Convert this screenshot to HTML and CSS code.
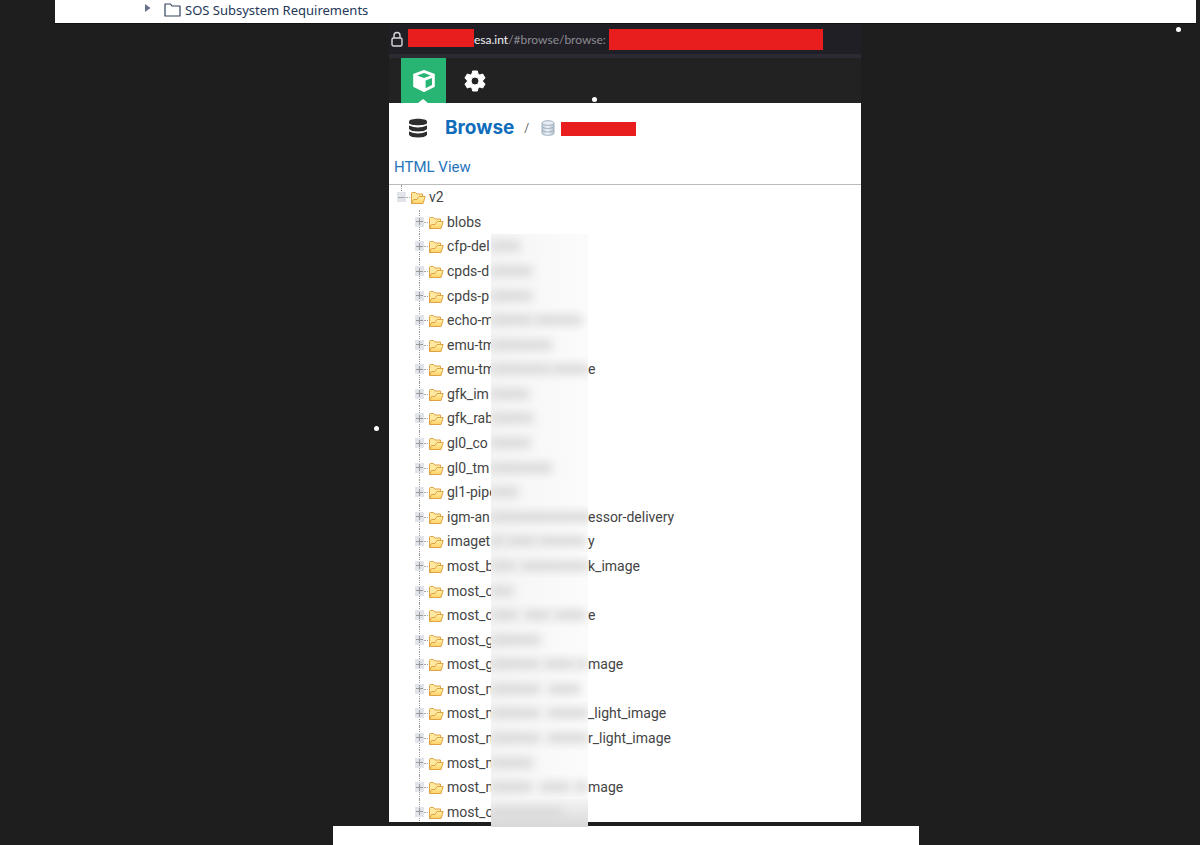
FILE: index.html
```html
<!DOCTYPE html>
<html lang="en">
<head>
<meta charset="utf-8">
<title>Browse</title>
<link rel="stylesheet" href="styles.css">
</head>
<body>
<svg class="defs" aria-hidden="true">
  <defs>
    <linearGradient id="gold" x1="0" y1="0" x2="0" y2="1"><stop offset="0" stop-color="#fff0a8"/><stop offset="1" stop-color="#ffd166"/></linearGradient>
    <linearGradient id="steel" x1="0" y1="0" x2="1" y2="0"><stop offset="0" stop-color="#b9c5d1"/><stop offset=".45" stop-color="#f0f5fa"/><stop offset="1" stop-color="#b3bfcb"/></linearGradient>
    <symbol id="folder" viewBox="0 0 16 14">
      <path d="M1.5 12.5V2.5Q1.5 1.5 2.5 1.5H5.5L7 3H12.5V5.5" fill="#ffe9a0" stroke="#dfa244"/>
      <path d="M1.5 12.5L3.5 8.5H7L9 5.5H15.2L13 12.5Z" fill="url(#gold)" stroke="#dfa244" stroke-linejoin="round"/>
    </symbol>
  </defs>
</svg>
<div class="page">
  <header class="outline">
    <button class="caret" aria-label="Expand"><svg width="6" height="10" viewBox="0 0 6 10"><path d="M0 1L5.5 5L0 9Z" fill="#66718c"/></svg></button>
    <svg width="17" height="14" viewBox="0 0 17 14" fill="none" stroke="#34435f" stroke-width="1.2"><path d="M1 13V1H6.5L8 3H16V13Z" stroke-linejoin="round"/></svg>
    <a class="outline-link" href="#sos">SOS Subsystem Requirements</a>
  </header>

  <main class="window">
    <div class="address">
      <svg class="lock" width="12" height="16" viewBox="0 0 12 16" fill="none" stroke="#d8d8dc" stroke-width="1.4"><rect x="1" y="7" width="10" height="8" rx="1.5"/><path d="M3 7V4.5a3 3 0 0 1 6 0V7"/></svg>
      <span class="redact redact-host"></span>
      <span class="url"><b>esa.int</b>/#browse/browse:</span>
      <span class="redact redact-repo"></span>
    </div>
    <nav class="modes">
      <button class="mode active" aria-label="Browse">
        <svg width="24" height="24" viewBox="0 0 24 24"><path d="M12 1.8L22 5.4V17.4L12 22.2L2 17.4V5.4Z" fill="#fff" stroke="#fff" stroke-width="1.6" stroke-linejoin="round"/><path d="M12 3.9L18.8 6.4L12 9L5.2 6.4Z" fill="#28b473"/><path d="M13.6 11.6L20 9.1V16L13.6 19.2Z" fill="#28b473"/></svg>
      </button>
      <button class="mode" aria-label="Administration">
        <svg width="24" height="24" viewBox="0 0 24 24"><path fill="#fff" stroke="#fff" stroke-linejoin="round" fill-rule="evenodd" d="M9.6 2h4.8l.6 3 1.8 1 2.9-1 2.4 4.1-2.3 2v1.8l2.3 2-2.4 4.1-2.9-1-1.8 1-.6 3H9.6l-.6-3-1.8-1-2.9 1-2.4-4.1 2.3-2v-1.8l-2.3-2 2.4-4.1 2.9 1 1.8-1ZM12 8a4 4 0 1 0 0 8 4 4 0 0 0 0-8Z"/></svg>
      </button>
    </nav>
    <div class="crumbs">
      <svg width="20" height="20" viewBox="0 0 20 20" fill="#2e2e2e"><path d="M1 3.5C1 -.2 19 -.2 19 3.5V5C19 8 1 8 1 5Z"/><path d="M1 7.5Q10 11.5 19 7.5V11Q17 13.5 10 13.5T1 11Z"/><path d="M1 13.5Q10 17.5 19 13.5V17Q17 19.5 10 19.5T1 17Z"/></svg>
      <h1>Browse</h1>
      <span class="slash">/</span>
      <svg width="14" height="16" viewBox="0 0 14 16" fill="url(#steel)" stroke="#a3b1bf"><path d="M1 3V13Q1 15.3 7 15.3T13 13V3"/><ellipse cx="7" cy="3" rx="6" ry="2.3" fill="#e6edf4"/><path d="M1 6.5Q2 8.5 7 8.5T13 6.5M1 10Q2 12 7 12T13 10" fill="none"/></svg>
      <span class="redact redact-name"></span>
    </div>
    <div class="toolbar"><a href="#html">HTML View</a></div>
    <ul class="tree" id="tree">
      <li class="row root">
        <button class="toggle minus" aria-label="Collapse v2"></button>
        <svg class="folder" width="16" height="14"><use href="#folder"/></svg>
        <span class="name">v2</span>
      </li>
    </ul>
  </main>
  <footer class="sheet"></footer>
  <i class="dot dot-nav"></i>
  <i class="dot dot-left"></i>
  <i class="dot dot-right"></i>
</div>
<script src="tree.js"></script>
</body>
</html>
```
FILE: styles.css
```css
* { box-sizing: border-box; }
body { margin: 0; background: #1e1e1e; font-family: Roboto, "Open Sans", sans-serif; color: #444; }
button { border: 0; padding: 0; background: none; font: inherit; }
svg { flex: none; display: block; }
a { text-decoration: none; }
.defs { position: absolute; width: 0; height: 0; }
.page { position: relative; display: flex; flex-direction: column; height: 100vh; min-height: 600px; overflow: hidden; }

.outline { flex: none; display: flex; align-items: center; height: 24px; margin: 0 4px 0 55px; padding: 0 0 4px 90px; background: #fff; border-bottom: 1px solid #111; }
.caret { display: flex; width: 19px; height: 10px; margin-bottom: 3px; }
.outline-link { margin-left: 4px; font: 13px/20px "Noto Sans", sans-serif; color: #253858; }

.window { position: relative; z-index: 1; flex: 1; min-height: 0; display: flex; flex-direction: column; width: 472px; margin-left: 389px; background: #fff; }
.address { flex: none; display: flex; align-items: center; height: 34px; padding: 0 2px; background: #201f26; border-bottom: 4px solid #2c2b33; }
.lock { margin-right: 5px; }
.redact { flex: none; background: #e81e1e; }
.redact-host { width: 66px; height: 18px; margin-bottom: 2px; }
.redact-repo { width: 214px; height: 21px; }
.url { width: 135px; font: 12px/18px Lato, sans-serif; color: #8c8c92; white-space: nowrap; padding-top: 2px; }
.url b { font-weight: 400; color: #f2f2f5; }
.modes { flex: none; display: flex; gap: 6px; height: 45px; padding-left: 12px; background: #222; }
.mode { position: relative; display: grid; place-items: center; width: 45px; height: 45px; }
.active { background: #28b473; }
.active::after { content: ""; position: absolute; bottom: 0; left: 17px; border: 5px solid transparent; border-top: 0; border-bottom: 4px solid #fff; }
.crumbs { flex: none; display: flex; align-items: center; height: 48px; padding: 1px 0 0 19px; }
h1 { margin: 0 10px 0 17px; font: 700 19px/24px Inter, sans-serif; color: #0f6dbc; }
.slash { margin-right: 12px; font-size: 12px; color: #666; }
.redact-name { width: 75px; height: 14px; margin: 3px 0 0 6px; }
.toolbar { flex: none; height: 34px; padding: 6px 5px; border-bottom: 1px solid #bbb; font-size: 15px; line-height: 20px; }
.toolbar a { color: #1f74bc; }

.tree { flex: 1; min-height: 0; display: grid; grid-auto-rows: 1fr; margin: 0 0 -2px; padding: 0 0 0 26px; list-style: none; font-size: 14px; line-height: 24px; }
.row { position: relative; display: flex; align-items: center; min-height: 0; }
.root { margin-left: -18px; }
.row::before { content: ""; position: absolute; left: 4px; top: 0; bottom: 0; border-left: 1px dotted #999; }
.root::before { bottom: 50%; }
.row:last-child::before { bottom: 3px; }
.toggle { position: relative; width: 9px; height: 10px; background: linear-gradient(#999, #999) 50% 50% / 7px 1px no-repeat, linear-gradient(#999, #999) 50% 50% / 1px 7px no-repeat, #e1e4ea; }
.minus { background: linear-gradient(#aaa, #aaa) 50% 50% / 7px 1px no-repeat, #e1e4ea; }
.toggle::after { content: ""; position: absolute; left: 9px; top: 5px; width: 4px; border-top: 1px dotted #aaa; }
.folder { margin: 2px 3px 0 4px; }
.name { width: 44px; white-space: nowrap; }
.mask { position: relative; align-self: stretch; display: flex; align-items: center; width: 97px; overflow: hidden; background: linear-gradient(90deg, #f5f5f5, #fbfbfb); }
.mask.clear { background: none; }
.smear { flex: none; height: 10px; margin: 0 -1px; background: #d9d9d9; filter: blur(5px); }
.row:last-child .mask { margin-bottom: -3px; background: linear-gradient(#f4f4f4, #d8d8d8); }
.tail { white-space: nowrap; }

.sheet { flex: none; height: 23px; margin: 0 281px 0 333px; background: #fff; border-top: 4px solid #1e1e1e; }
.dot { position: absolute; z-index: 2; width: 5px; height: 5px; border-radius: 50%; background: #fff; }
.dot-nav { left: 592px; top: 97px; }
.dot-left { left: 374px; top: 426px; }
.dot-right { left: 1176px; top: 27px; }
```
FILE: tree.js
```javascript
// Each row: visible start of the name, obscured chunks [width, gap, width, ...], visible end.
const rows = [
  ["blobs", null, ""],
  ["cfp-del", [30], ""],
  ["cpds-d", [42], ""],
  ["cpds-p", [42], ""],
  ["echo-m", [42, 4, 48], ""],
  ["emu-tm", [62], ""],
  ["emu-tm", [60, 3, 38], "e"],
  ["gfk_im", [39], ""],
  ["gfk_rab", [43], ""],
  ["gl0_co", [40], ""],
  ["gl0_tm", [62], ""],
  ["gl1-pipe", [28], ""],
  ["igm-an", [102], "essor-delivery"],
  ["imaget", [14, 4, 30, 4, 48], "y"],
  ["most_b", [26, 8, 68], "k_image"],
  ["most_c", [23], ""],
  ["most_c", [28, 8, 26, 6, 32], "e"],
  ["most_g", [50], ""],
  ["most_g", [50, 6, 30, 4, 12], "mage"],
  ["most_m", [50, 10, 32], ""],
  ["most_m", [50, 10, 42], "_light_image"],
  ["most_m", [50, 10, 42], "r_light_image"],
  ["most_m", [43], ""],
  ["most_m", [42, 10, 30, 6, 14], "mage"],
  ["most_o", [72], ""]
];

document.getElementById("tree").insertAdjacentHTML("beforeend", rows.map(([name, chunks, tail]) => {
  const smear = (chunks || []).map((w, i) =>
    i % 2 ? `<i style="width:${w}px"></i>` : `<i class="smear" style="width:${w}px"></i>`).join("");
  return `<li class="row">
    <button class="toggle" aria-label="Expand ${name}"></button>
    <svg class="folder" width="16" height="14"><use href="#folder"/></svg>
    <span class="name">${name}</span>
    <span class="mask${chunks ? "" : " clear"}">${smear}</span>
    <span class="tail">${tail}</span>
  </li>`;
}).join(""));
```
